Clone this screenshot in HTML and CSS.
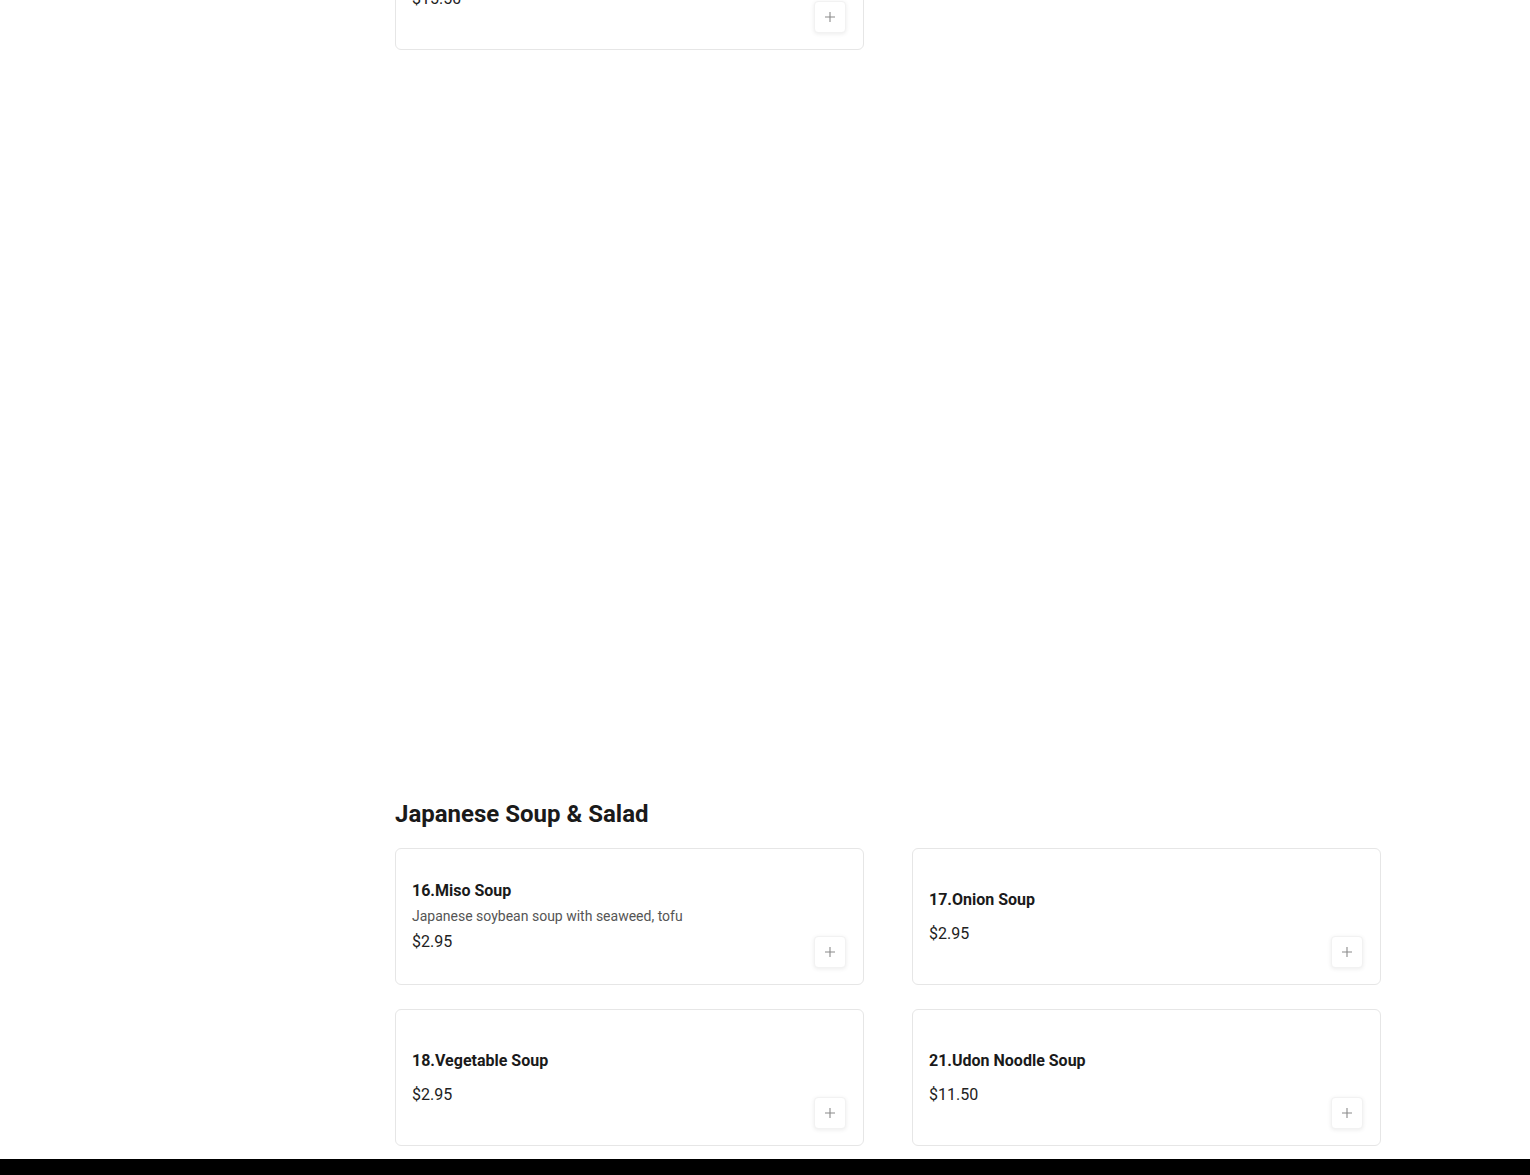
FILE: index.html
```html
<!DOCTYPE html>
<html lang="en">
<head>
<meta charset="utf-8">
<title>Menu</title>
<link rel="stylesheet" href="styles.css">
</head>
<body>
<div class="page">
  <aside class="sidebar"></aside>
  <main class="menu">
    <section class="category category-first">
      <div class="grid">
        <div class="card">
          <div class="info">
            <div class="name name-only">15.Chicken Teriyaki</div>
            <div class="price">$15.50</div>
          </div>
          <button class="add" aria-label="Add">
            <svg width="12" height="12" viewBox="0 0 12 12"><path d="M6 1v10M1 6h10" stroke="#8a8a8a" stroke-width="1.1" fill="none"/></svg>
          </button>
        </div>
      </div>
    </section>

    <div class="lazy-placeholder"></div>

    <section class="category">
      <h2 class="cat-title">Japanese Soup &amp; Salad</h2>
      <div class="grid">
        <div class="card">
          <div class="info">
            <div class="name">16.Miso Soup</div>
            <div class="desc">Japanese soybean soup with seaweed, tofu</div>
            <div class="price">$2.95</div>
          </div>
          <button class="add" aria-label="Add">
            <svg width="12" height="12" viewBox="0 0 12 12"><path d="M6 1v10M1 6h10" stroke="#8a8a8a" stroke-width="1.1" fill="none"/></svg>
          </button>
        </div>
        <div class="card">
          <div class="info">
            <div class="name name-only">17.Onion Soup</div>
            <div class="price">$2.95</div>
          </div>
          <button class="add" aria-label="Add">
            <svg width="12" height="12" viewBox="0 0 12 12"><path d="M6 1v10M1 6h10" stroke="#8a8a8a" stroke-width="1.1" fill="none"/></svg>
          </button>
        </div>
        <div class="card">
          <div class="info">
            <div class="name name-only">18.Vegetable Soup</div>
            <div class="price">$2.95</div>
          </div>
          <button class="add" aria-label="Add">
            <svg width="12" height="12" viewBox="0 0 12 12"><path d="M6 1v10M1 6h10" stroke="#8a8a8a" stroke-width="1.1" fill="none"/></svg>
          </button>
        </div>
        <div class="card">
          <div class="info">
            <div class="name name-only">21.Udon Noodle Soup</div>
            <div class="price">$11.50</div>
          </div>
          <button class="add" aria-label="Add">
            <svg width="12" height="12" viewBox="0 0 12 12"><path d="M6 1v10M1 6h10" stroke="#8a8a8a" stroke-width="1.1" fill="none"/></svg>
          </button>
        </div>
      </div>
    </section>
  </main>
</div>
<footer class="footer"></footer>
</body>
</html>
```

FILE: styles.css
```css
* { box-sizing: border-box; }

html, body {
  margin: 0;
  padding: 0;
  background: #fff;
  font-family: Roboto, "Liberation Sans", Arial, sans-serif;
  color: #1a1a1a;
}

.page {
  display: flex;
  gap: 48px;
}

.sidebar {
  width: 347px;
  flex: none;
}

.menu {
  width: 986px;
  flex: none;
}

.category-first {
  margin-top: -87px;
}

.lazy-placeholder {
  height: 748px;
}

.cat-title {
  margin: 0 0 18px;
  font-size: 24px;
  line-height: 32px;
  font-weight: 700;
  color: #1a1a1a;
}

.grid {
  display: grid;
  grid-template-columns: 1fr 1fr;
  column-gap: 48px;
  row-gap: 24px;
}

.card {
  height: 137px;
  border: 1px solid #e6e6e6;
  border-radius: 6px;
  padding: 16px 17px 16px 16px;
  display: flex;
  background: #fff;
}

.info {
  flex: 1;
  display: flex;
  flex-direction: column;
  justify-content: center;
  min-width: 0;
}

.name {
  font-size: 16px;
  line-height: 24px;
  font-weight: 700;
  color: #1a1a1a;
  margin-bottom: 3px;
}

.name-only {
  margin-bottom: 10px;
}

.desc {
  font-size: 14px;
  line-height: 20px;
  color: #555;
  margin-bottom: 4px;
}

.price {
  font-size: 16px;
  line-height: 24px;
  color: #222;
}

.add {
  align-self: flex-end;
  flex: none;
  width: 32px;
  height: 32px;
  padding: 0;
  border: 1px solid #f2f2f2;
  border-radius: 4px;
  background: #fff;
  box-shadow: 0 1px 4px rgba(0, 0, 0, 0.08);
  display: flex;
  align-items: center;
  justify-content: center;
  cursor: pointer;
}

.footer {
  margin-top: 13px;
  height: 200px;
  background: #000;
}
```
